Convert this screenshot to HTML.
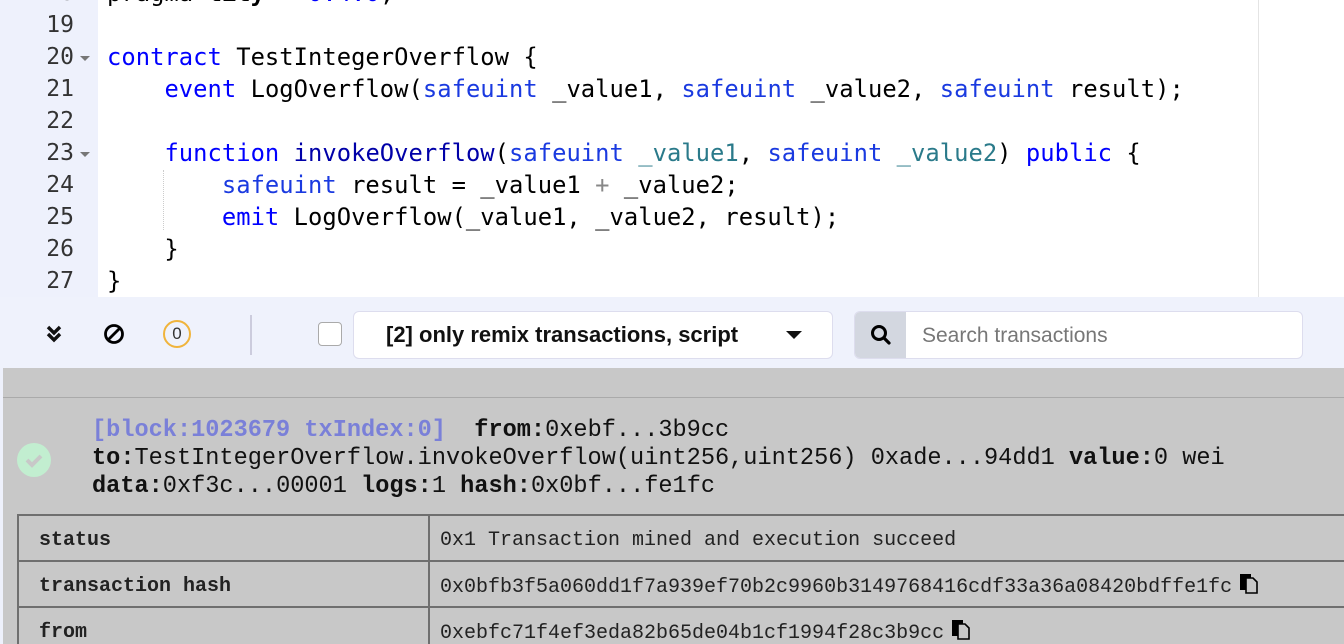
<!DOCTYPE html>
<html><head><style>
*{margin:0;padding:0;box-sizing:border-box}
html,body{width:1344px;height:644px;overflow:hidden}
body{background:#eef1fc;position:relative;font-family:"Liberation Sans",sans-serif}
.ed{position:absolute;left:0;top:0;width:1344px;height:297px;background:#fff;overflow:hidden}
.gut{position:absolute;left:0;top:0;width:98px;height:297px;background:#eef1fc}
.ln{position:absolute;left:0;width:74px;text-align:right;font:23px/32px "DejaVu Sans Mono",monospace;color:#333}
.fold{position:absolute;left:80px;width:0;height:0;border-left:5px solid transparent;border-right:5px solid transparent;border-top:5px solid #777}
.cl{position:absolute;left:107px;font:23.8px/32px "DejaVu Sans Mono",monospace;white-space:pre;color:#000;letter-spacing:0.03px}
.k{color:#0000ff}.t{color:#1a3ae0}.f{color:#0000a8}.p{color:#2a7a8a}.o{color:#888}
.tb{position:absolute;left:0;top:297px;width:1344px;height:71px;background:#eff2fc}
.con{position:absolute;left:3px;top:368px;width:1341px;height:276px;background:#c8c8c8;overflow:hidden}
.mono{font-family:"Liberation Mono",monospace}
td{border:2px solid #6f6f6f;height:46px;font:20px "Liberation Mono",monospace;padding:4px 0 0 10px;vertical-align:middle;color:#222;white-space:nowrap}
td.h{font-weight:bold;padding-left:20px}
.cp{display:inline-block;vertical-align:-3px;margin-left:6px}
</style></head><body>
<div class="ed">
<div class="gut"></div>
<div style="position:absolute;left:1258px;top:0;width:1px;height:297px;background:#e4e4e4"></div>
<div class="ln" style="top:-23px">18</div><div class="ln" style="top:9px">19</div><div class="ln" style="top:41px">20</div><div class="ln" style="top:73px">21</div><div class="ln" style="top:105px">22</div><div class="ln" style="top:137px">23</div><div class="ln" style="top:169px">24</div><div class="ln" style="top:201px">25</div><div class="ln" style="top:233px">26</div><div class="ln" style="top:265px">27</div>
<div class="fold" style="top:56px"></div><div class="fold" style="top:152px"></div>
<div class="cl" style="top:-23px">pragma <b>lity</b> <span class="o">^</span> <span class="k">0.4.0</span>;</div>
<div class="cl" style="top:41px"><span class="k">contract</span> TestIntegerOverflow {</div>
<div class="cl" style="top:73px">    <span class="k">event</span> LogOverflow(<span class="t">safeuint</span> _value1, <span class="t">safeuint</span> _value2, <span class="t">safeuint</span> result);</div>
<div class="cl" style="top:137px">    <span class="k">function</span> <span class="f">invokeOverflow</span>(<span class="t">safeuint</span> <span class="p">_value1</span>, <span class="t">safeuint</span> <span class="p">_value2</span>) <span class="k">public</span> {</div>
<div style="position:absolute;left:163px;top:170px;height:60px;border-left:1px dotted #ccc"></div>
<div class="cl" style="top:169px">        <span class="t">safeuint</span> result = _value1 <span class="o">+</span> _value2;</div>
<div class="cl" style="top:201px">        <span class="k">emit</span> LogOverflow(_value1, _value2, result);</div>
<div class="cl" style="top:233px">    }</div>
<div class="cl" style="top:265px">}</div>
</div>
<div class="tb">
<svg style="position:absolute;left:44px;top:27px" width="20" height="20" viewBox="0 0 20 20"><path d="M4 3l6 6 6-6M4 10l6 6 6-6" stroke="#111" stroke-width="3.4" fill="none"/></svg>
<svg style="position:absolute;left:103px;top:26px" width="22" height="22" viewBox="0 0 22 22"><circle cx="11" cy="11" r="8.5" stroke="#000" stroke-width="2.8" fill="none"/><path d="M5.5 16.5L16.5 5.5" stroke="#000" stroke-width="2.8"/></svg>
<div style="position:absolute;left:163px;top:23px;width:28px;height:28px;border:2px solid #f0b43c;border-radius:50%;font:17px/24px sans-serif;text-align:center;color:#333">0</div>
<div style="position:absolute;left:250px;top:18px;width:2px;height:40px;background:#ccd"></div>
<div style="position:absolute;left:318px;top:25px;width:24px;height:24px;border:1px solid #aaa;border-radius:4px;background:#fff"></div>
<div style="position:absolute;left:353px;top:14px;width:480px;height:48px;background:#fff;border:1px solid #dde;border-radius:6px;font-family:'Liberation Sans',sans-serif;font-weight:bold;font-size:22px;line-height:46px;color:#111;padding-left:32px">[2] only remix transactions, script
<div style="position:absolute;left:432px;top:19px;border-left:8px solid transparent;border-right:8px solid transparent;border-top:8px solid #111"></div></div>
<div style="position:absolute;left:854px;top:14px;width:449px;height:48px;background:#fff;border:1px solid #dde;border-radius:6px;overflow:hidden">
<div style="position:absolute;left:0;top:0;width:51px;height:48px;background:#d3d7e0"></div>
<svg style="position:absolute;left:14px;top:11px" width="24" height="24" viewBox="0 0 24 24"><circle cx="10" cy="10" r="6.5" stroke="#000" stroke-width="3" fill="none"/><path d="M15 15l5 5" stroke="#000" stroke-width="3.2" stroke-linecap="round"/></svg>
<div style="position:absolute;left:67px;top:1px;font-family:'Liberation Sans',sans-serif;font-size:21px;line-height:46px;color:#777">Search transactions</div></div>
</div>
<div class="con">
<div style="position:absolute;left:0;top:29px;width:1341px;height:1px;background:#aaa"></div>
<div style="position:absolute;left:14px;top:75px;width:34px;height:34px;border-radius:50%;background:#c2eed0"></div>
<svg style="position:absolute;left:14px;top:75px" width="34" height="34"><path d="M10 17l5 5 9-9" stroke="#c8c8c8" stroke-width="4" fill="none"/></svg>
<div class="mono" style="position:absolute;left:89px;top:49px;font-size:23.6px;line-height:28px;white-space:pre;color:#111"><b style="color:#7a80d8">[block:1023679 txIndex:0]</b>  <b>from:</b>0xebf...3b9cc
<b>to:</b>TestIntegerOverflow.invokeOverflow(uint256,uint256) 0xade...94dd1 <b>value:</b>0 wei
<b>data:</b>0xf3c...00001 <b>logs:</b>1 <b>hash:</b>0x0bf...fe1fc</div>
<table style="position:absolute;left:14px;top:146px;border-collapse:collapse;width:1360px">
<tr><td class="h" style="width:411px">status</td><td>0x1 Transaction mined and execution succeed</td></tr>
<tr><td class="h">transaction hash</td><td>0x0bfb3f5a060dd1f7a939ef70b2c9960b3149768416cdf33a36a08420bdffe1fc<svg class="cp" width="22" height="22" viewBox="0 0 22 22"><rect x="2" y="1" width="11" height="16" fill="#000"/><path d="M8 5h7l4 4v11H8z" fill="#c8c8c8" stroke="#000" stroke-width="1.6"/></svg></td></tr>
<tr><td class="h">from</td><td>0xebfc71f4ef3eda82b65de04b1cf1994f28c3b9cc<svg class="cp" width="22" height="22" viewBox="0 0 22 22"><rect x="2" y="1" width="11" height="16" fill="#000"/><path d="M8 5h7l4 4v11H8z" fill="#c8c8c8" stroke="#000" stroke-width="1.6"/></svg></td></tr>
</table>
</div>
</body></html>
